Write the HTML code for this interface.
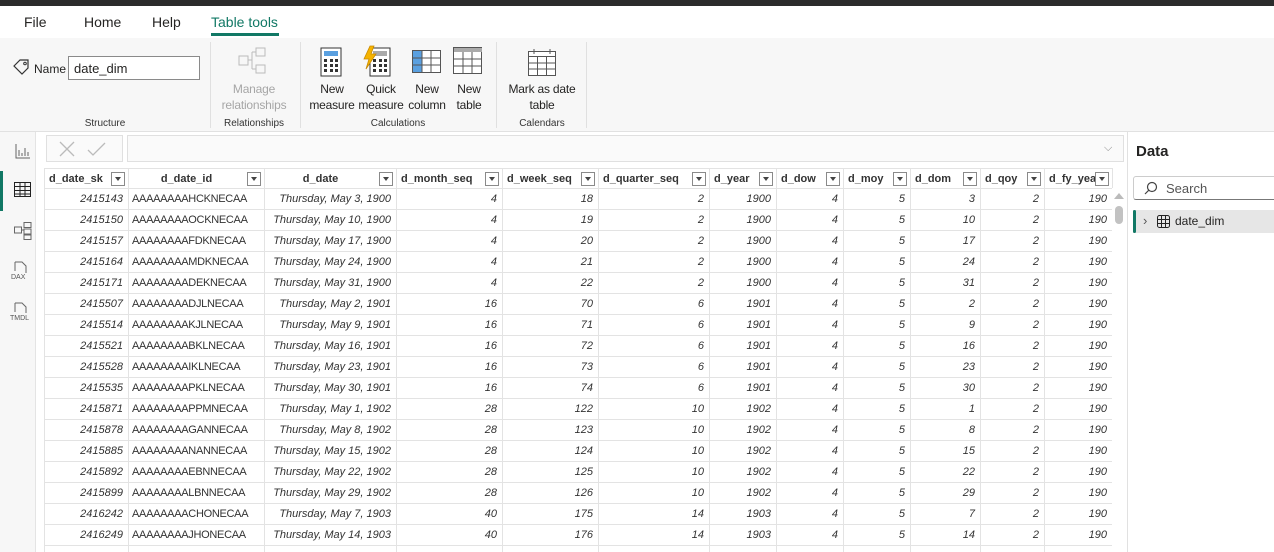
<!DOCTYPE html>
<html><head><meta charset="utf-8"><style>
*{box-sizing:border-box;margin:0;padding:0}
html,body{width:1274px;height:552px;overflow:hidden}
body{background:#fff;font-family:"Liberation Sans",sans-serif;color:#252423;position:relative}
.a{position:absolute}
.top{left:0;top:0;width:1274px;height:6px;background:#2b2b2b}
.menu{left:0;top:6px;width:1274px;height:34px;background:#fff}
.tab{top:14px;font-size:14px}
.rib{left:0;top:38px;width:1274px;height:94px;background:#f7f7f7;border-bottom:1px solid #e1e1e1}
.lbl{font-size:12px;text-align:center;line-height:16px;color:#252423;letter-spacing:-.2px}
.grp{font-size:10px;color:#333;top:118px;text-align:center}
.sep{top:42px;width:1px;height:86px;background:#e0e0e0}
.side{left:0;top:132px;width:36px;height:420px;background:#f7f7f7;border-right:1px solid #e4e4e4}
table{border-collapse:collapse;position:absolute;left:44px;top:168px;table-layout:fixed;width:1068px;font-size:11px}
td,th{border:1px solid #e3e3e3;height:21px;padding:0 5px;white-space:nowrap;overflow:hidden}
th{font-weight:bold;height:20px;text-align:left;position:relative;color:#333;font-size:11px;padding-left:4px}
th i{position:absolute;right:3px;top:3px;width:14px;height:14px;border:1px solid #8a8a8a;background:#fff}
th i:after{content:"";position:absolute;left:3px;top:4px;border:3px solid transparent;border-top:4px solid #444}
td{font-style:italic;text-align:right;color:#333}
td.l{text-align:left;font-style:normal;padding-left:3px;letter-spacing:-.3px}
</style></head><body>
<div class="a top"></div>
<div class="a menu"></div>
<div class="a tab" style="left:24px">File</div>
<div class="a tab" style="left:84px">Home</div>
<div class="a tab" style="left:152px">Help</div>
<div class="a tab" style="left:211px;color:#117865">Table tools</div>
<div class="a" style="left:211px;top:33px;width:68px;height:3px;background:#117865"></div>
<div class="a rib"></div>
<svg class="a" style="left:12px;top:59px" width="20" height="16"><path d="M2 7 L8 1 H16 V9 L10 15 Z" fill="none" stroke="#333" stroke-width="1.2"/><circle cx="13" cy="4.5" r="1.3" fill="none" stroke="#333"/></svg>
<div class="a" style="left:34px;top:62px;font-size:12px">Name</div>
<div class="a" style="left:68px;top:56px;width:132px;height:24px;border:1px solid #8a8a8a;background:#fff;font-size:13px;padding:4px 5px">date_dim</div>
<div class="a grp" style="left:70px;width:70px">Structure</div>
<div class="a sep" style="left:210px"></div>
<svg class="a" style="left:238px;top:47px" width="32" height="28" stroke="#bbb" fill="none"><rect x="1" y="9" width="9" height="9"/><rect x="18" y="1" width="9" height="8"/><rect x="18" y="18" width="9" height="8"/><path d="M10 13H14M14 5V22M14 5H18M14 22H18"/></svg>
<div class="a lbl" style="left:214px;top:81px;width:80px;color:#a6a6a6">Manage<br>relationships</div>
<div class="a grp" style="left:214px;width:80px">Relationships</div>
<div class="a sep" style="left:300px"></div>
<svg class="a" style="left:320px;top:47px" width="22" height="30"><rect x="1" y="1" width="20" height="28" fill="#fff" stroke="#333"/><rect x="4" y="4" width="14" height="5" fill="#5aa0e0"/><g fill="#333"><rect x="4" y="12" width="3" height="3"/><rect x="10" y="12" width="3" height="3"/><rect x="15" y="12" width="3" height="3"/><rect x="4" y="17" width="3" height="3"/><rect x="10" y="17" width="3" height="3"/><rect x="15" y="17" width="3" height="3"/><rect x="4" y="22" width="3" height="3"/><rect x="10" y="22" width="3" height="3"/><rect x="15" y="22" width="3" height="3"/></g></svg>
<svg class="a" style="left:362px;top:45px" width="30" height="32"><rect x="8" y="3" width="20" height="28" fill="#fff" stroke="#333"/><rect x="11" y="6" width="14" height="5" fill="#aaa"/><g fill="#333"><rect x="11" y="14" width="3" height="3"/><rect x="17" y="14" width="3" height="3"/><rect x="22" y="14" width="3" height="3"/><rect x="11" y="19" width="3" height="3"/><rect x="17" y="19" width="3" height="3"/><rect x="22" y="19" width="3" height="3"/><rect x="11" y="24" width="3" height="3"/><rect x="17" y="24" width="3" height="3"/><rect x="22" y="24" width="3" height="3"/></g><path d="M8 1 L2 14 H7 L4 24 L14 9 H9 L12 1Z" fill="#f5b300" stroke="#c98a00" stroke-width=".8"/></svg>
<svg class="a" style="left:412px;top:50px" width="30" height="24"><rect x=".5" y=".5" width="28" height="22" fill="#fff" stroke="#555"/><rect x="1" y="1" width="9" height="21" fill="#5aa0e0"/><path d="M10 1V23M19 1V23M1 8H29M1 15H29" stroke="#555"/></svg>
<svg class="a" style="left:453px;top:47px" width="30" height="28"><rect x=".5" y=".5" width="28" height="26" fill="#fff" stroke="#555"/><rect x="1" y="1" width="28" height="4" fill="#aaa"/><path d="M10 5V27M19 5V27M1 12H29M1 19H29" stroke="#555"/></svg>
<div class="a lbl" style="left:306px;top:81px;width:52px">New<br>measure</div>
<div class="a lbl" style="left:356px;top:81px;width:50px">Quick<br>measure</div>
<div class="a lbl" style="left:406px;top:81px;width:42px">New<br>column</div>
<div class="a lbl" style="left:450px;top:81px;width:38px">New<br>table</div>
<div class="a grp" style="left:356px;width:84px">Calculations</div>
<div class="a sep" style="left:496px"></div>
<svg class="a" style="left:527px;top:47px" width="30" height="30" fill="none" stroke="#555"><rect x="1.5" y="4.5" width="27" height="24" fill="#fff"/><path d="M1.5 9.5H28.5M1.5 16H28.5M1.5 22H28.5M10.5 9.5V28.5M19.5 9.5V28.5M7 2V7M23 2V7"/></svg>
<div class="a lbl" style="left:502px;top:81px;width:80px">Mark as date<br>table</div>
<div class="a grp" style="left:502px;width:80px">Calendars</div>
<div class="a sep" style="left:586px"></div>
<div class="a side"></div>
<div class="a" style="left:0;top:171px;width:3px;height:40px;background:#117865"></div>
<svg class="a" style="left:15px;top:143px" width="16" height="16" fill="none" stroke="#666"><path d="M1 1V15H15M4 7V13M7 10V13M10 5V13M13 9V13"/></svg>
<svg class="a" style="left:14px;top:182px" width="18" height="16" fill="none" stroke="#222"><rect x=".5" y=".5" width="16" height="14"/><path d="M.5 4.5H16.5M.5 8.5H16.5M.5 12H16.5M6 .5V14.5M11 .5V14.5"/></svg>
<svg class="a" style="left:14px;top:222px" width="18" height="18" fill="none" stroke="#666"><rect x=".5" y="5" width="7" height="6"/><rect x="10" y=".5" width="7" height="5"/><rect x="10" y="7" width="7" height="5"/><rect x="10" y="13" width="7" height="4.5"/><path d="M7.5 8H10"/></svg>
<svg class="a" style="left:11px;top:261px" width="20" height="20" fill="none" stroke="#666"><path d="M4 1H11L15 5V12M4 1V10"/><text x="0" y="18" font-size="7" fill="#555" stroke="none" font-family="Liberation Sans">DAX</text></svg>
<svg class="a" style="left:10px;top:302px" width="22" height="20" fill="none" stroke="#666"><path d="M5 1H12L16 5V11M5 1V10"/><text x="0" y="18" font-size="7" fill="#555" stroke="none" font-family="Liberation Sans">TMDL</text></svg>
<div class="a" style="left:46px;top:135px;width:77px;height:27px;border:1px solid #e0e0e0;background:#fafafa"></div>
<svg class="a" style="left:58px;top:140px" width="50" height="18" stroke="#bbb" fill="none" stroke-width="1.3"><path d="M2 2L16 16M16 2L2 16M30 10L35 15L47 3"/></svg>
<div class="a" style="left:127px;top:135px;width:997px;height:27px;border:1px solid #e0e0e0;background:#fafafa"></div>
<div class="a" style="left:1104px;top:142px;font-size:11px;color:#888">⌵</div>
<table>
<colgroup><col style="width:84px"><col style="width:136px"><col style="width:132px"><col style="width:106px"><col style="width:96px"><col style="width:111px"><col style="width:67px"><col style="width:67px"><col style="width:67px"><col style="width:70px"><col style="width:64px"><col style="width:68px"></colgroup>
<tr><th>d_date_sk<i></i></th><th style="text-align:center;padding-right:24px">d_date_id<i></i></th><th style="text-align:center;padding-right:24px">d_date<i></i></th><th>d_month_seq<i></i></th><th>d_week_seq<i></i></th><th>d_quarter_seq<i></i></th><th>d_year<i></i></th><th>d_dow<i></i></th><th>d_moy<i></i></th><th>d_dom<i></i></th><th>d_qoy<i></i></th><th>d_fy_year<i></i></th></tr>
<tr><td>2415143</td><td class="l">AAAAAAAAHCKNECAA</td><td>Thursday, May 3, 1900</td><td>4</td><td>18</td><td>2</td><td>1900</td><td>4</td><td>5</td><td>3</td><td>2</td><td>190</td></tr>
<tr><td>2415150</td><td class="l">AAAAAAAAOCKNECAA</td><td>Thursday, May 10, 1900</td><td>4</td><td>19</td><td>2</td><td>1900</td><td>4</td><td>5</td><td>10</td><td>2</td><td>190</td></tr>
<tr><td>2415157</td><td class="l">AAAAAAAAFDKNECAA</td><td>Thursday, May 17, 1900</td><td>4</td><td>20</td><td>2</td><td>1900</td><td>4</td><td>5</td><td>17</td><td>2</td><td>190</td></tr>
<tr><td>2415164</td><td class="l">AAAAAAAAMDKNECAA</td><td>Thursday, May 24, 1900</td><td>4</td><td>21</td><td>2</td><td>1900</td><td>4</td><td>5</td><td>24</td><td>2</td><td>190</td></tr>
<tr><td>2415171</td><td class="l">AAAAAAAADEKNECAA</td><td>Thursday, May 31, 1900</td><td>4</td><td>22</td><td>2</td><td>1900</td><td>4</td><td>5</td><td>31</td><td>2</td><td>190</td></tr>
<tr><td>2415507</td><td class="l">AAAAAAAADJLNECAA</td><td>Thursday, May 2, 1901</td><td>16</td><td>70</td><td>6</td><td>1901</td><td>4</td><td>5</td><td>2</td><td>2</td><td>190</td></tr>
<tr><td>2415514</td><td class="l">AAAAAAAAKJLNECAA</td><td>Thursday, May 9, 1901</td><td>16</td><td>71</td><td>6</td><td>1901</td><td>4</td><td>5</td><td>9</td><td>2</td><td>190</td></tr>
<tr><td>2415521</td><td class="l">AAAAAAAABKLNECAA</td><td>Thursday, May 16, 1901</td><td>16</td><td>72</td><td>6</td><td>1901</td><td>4</td><td>5</td><td>16</td><td>2</td><td>190</td></tr>
<tr><td>2415528</td><td class="l">AAAAAAAAIKLNECAA</td><td>Thursday, May 23, 1901</td><td>16</td><td>73</td><td>6</td><td>1901</td><td>4</td><td>5</td><td>23</td><td>2</td><td>190</td></tr>
<tr><td>2415535</td><td class="l">AAAAAAAAPKLNECAA</td><td>Thursday, May 30, 1901</td><td>16</td><td>74</td><td>6</td><td>1901</td><td>4</td><td>5</td><td>30</td><td>2</td><td>190</td></tr>
<tr><td>2415871</td><td class="l">AAAAAAAAPPMNECAA</td><td>Thursday, May 1, 1902</td><td>28</td><td>122</td><td>10</td><td>1902</td><td>4</td><td>5</td><td>1</td><td>2</td><td>190</td></tr>
<tr><td>2415878</td><td class="l">AAAAAAAAGANNECAA</td><td>Thursday, May 8, 1902</td><td>28</td><td>123</td><td>10</td><td>1902</td><td>4</td><td>5</td><td>8</td><td>2</td><td>190</td></tr>
<tr><td>2415885</td><td class="l">AAAAAAAANANNECAA</td><td>Thursday, May 15, 1902</td><td>28</td><td>124</td><td>10</td><td>1902</td><td>4</td><td>5</td><td>15</td><td>2</td><td>190</td></tr>
<tr><td>2415892</td><td class="l">AAAAAAAAEBNNECAA</td><td>Thursday, May 22, 1902</td><td>28</td><td>125</td><td>10</td><td>1902</td><td>4</td><td>5</td><td>22</td><td>2</td><td>190</td></tr>
<tr><td>2415899</td><td class="l">AAAAAAAALBNNECAA</td><td>Thursday, May 29, 1902</td><td>28</td><td>126</td><td>10</td><td>1902</td><td>4</td><td>5</td><td>29</td><td>2</td><td>190</td></tr>
<tr><td>2416242</td><td class="l">AAAAAAAACHONECAA</td><td>Thursday, May 7, 1903</td><td>40</td><td>175</td><td>14</td><td>1903</td><td>4</td><td>5</td><td>7</td><td>2</td><td>190</td></tr>
<tr><td>2416249</td><td class="l">AAAAAAAAJHONECAA</td><td>Thursday, May 14, 1903</td><td>40</td><td>176</td><td>14</td><td>1903</td><td>4</td><td>5</td><td>14</td><td>2</td><td>190</td></tr>
<tr><td></td><td></td><td></td><td></td><td></td><td></td><td></td><td></td><td></td><td></td><td></td><td></td></tr>
</table>
<div class="a" style="left:1112px;top:188px;width:15px;height:364px;background:#fff"></div>
<div class="a" style="left:1114px;top:193px;border:5px solid transparent;border-bottom:6px solid #bbb;border-top:0"></div>
<div class="a" style="left:1115px;top:206px;width:8px;height:18px;border-radius:4px;background:#c2c2c2"></div>
<div class="a" style="left:1127px;top:132px;width:147px;height:420px;background:#fff;border-left:1px solid #e1e1e1"></div>
<div class="a" style="left:1136px;top:143px;font-size:15px;font-weight:bold">Data</div>
<div class="a" style="left:1133px;top:176px;width:150px;height:24px;border:1px solid #ccc;border-bottom:1px solid #777;border-radius:3px;background:#fff"></div>
<svg class="a" style="left:1144px;top:181px" width="14" height="14" fill="none" stroke="#444" stroke-width="1.2"><circle cx="8" cy="6" r="4.5"/><path d="M4.8 9.2L1 13"/></svg>
<div class="a" style="left:1166px;top:181px;font-size:13px;color:#555">Search</div>
<div class="a" style="left:1133px;top:210px;width:141px;height:23px;background:#e6e6e6"></div>
<div class="a" style="left:1133px;top:210px;width:3px;height:23px;background:#117865;border-radius:2px"></div>
<div class="a" style="left:1143px;top:213px;font-size:13px;color:#555">›</div>
<svg class="a" style="left:1157px;top:215px" width="13" height="13" fill="none" stroke="#222"><rect x=".5" y=".5" width="12" height="12" rx="2"/><path d="M.5 4.5H12.5M.5 8.5H12.5M4.5 .5V12.5M8.5 .5V12.5"/></svg>
<div class="a" style="left:1175px;top:214px;font-size:12px">date_dim</div>
</body></html>
